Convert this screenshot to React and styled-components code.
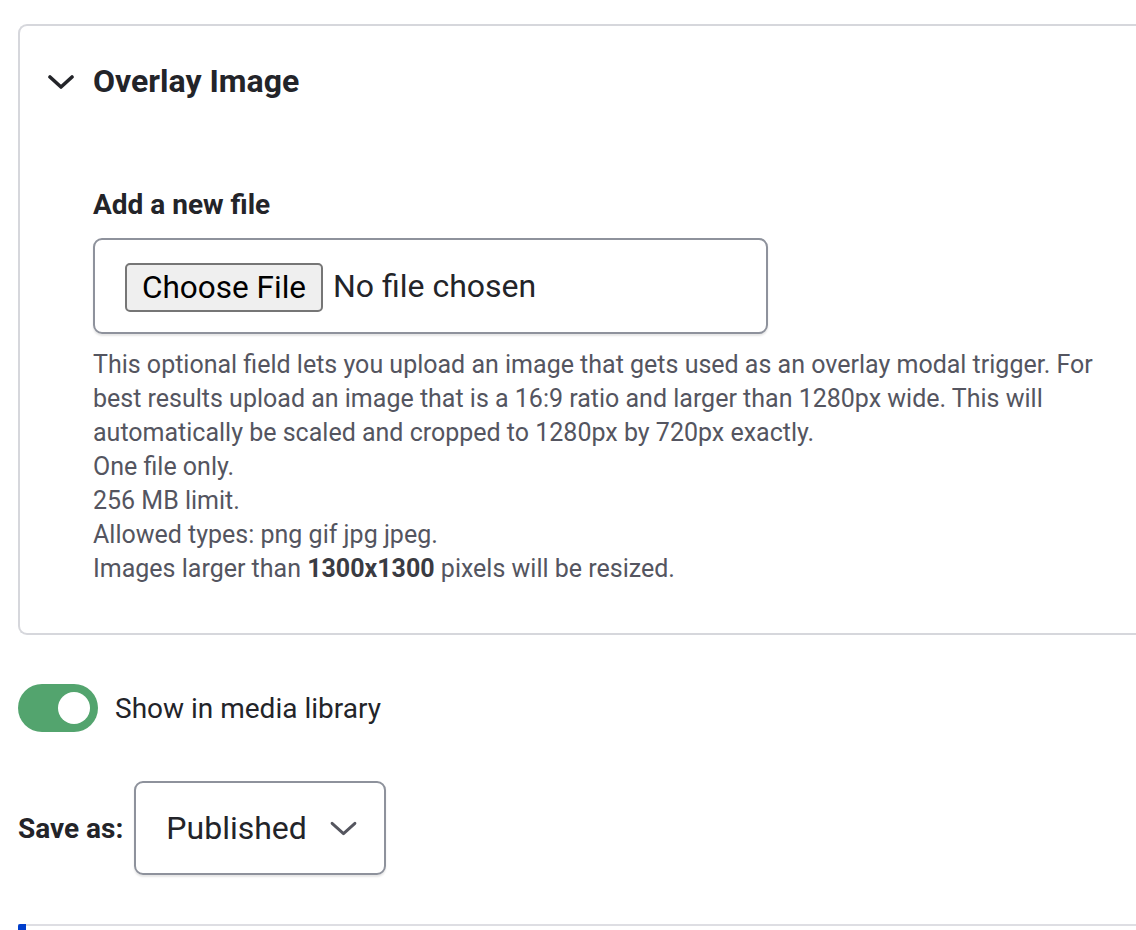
import React from 'react'
import styled, { createGlobalStyle } from 'styled-components'

const GlobalStyle = createGlobalStyle`
    html, body {
        margin: 0;
        padding: 0;
        background: #ffffff;
        overflow: hidden;
    }
    body {
        font-family: Roboto, "Liberation Sans", Arial, sans-serif;
        color: #232429;
    }
`;

const Chevron = ({ width, height, stroke, weight }) => (
    <svg width={width} height={height} viewBox="0 0 26 14" fill="none">
        <polyline
            points="2,2 13,12 24,2"
            stroke={stroke}
            strokeWidth={weight}
            strokeLinecap="round"
            strokeLinejoin="round"
        />
    </svg>
);

const App = () => {
    return (
        <Page>
            <GlobalStyle />
            <Card>
                <Summary>
                    <Chevron width={26} height={14} stroke="#232429" weight={3.6} />
                    <Title>Overlay Image</Title>
                </Summary>
                <Body>
                    <Label>Add a new file</Label>
                    <FileBox>
                        <ChooseButton type="button">Choose File</ChooseButton>
                        <FileName>No file chosen</FileName>
                    </FileBox>
                    <Description>
                        This optional field lets you upload an image that gets used as an overlay modal trigger. For
                        best results upload an image that is a 16:9 ratio and larger than 1280px wide. This will
                        automatically be scaled and cropped to 1280px by 720px exactly.
                        <br />
                        One file only.
                        <br />
                        256 MB limit.
                        <br />
                        Allowed types: png gif jpg jpeg.
                        <br />
                        Images larger than <strong>1300x1300</strong> pixels will be resized.
                    </Description>
                </Body>
            </Card>

            <ToggleRow>
                <Toggle $on>
                    <Knob $on />
                </Toggle>
                <ToggleLabel>Show in media library</ToggleLabel>
            </ToggleRow>

            <SaveRow>
                <SaveLabel>Save as:</SaveLabel>
                <Select>
                    <SelectValue>Published</SelectValue>
                    <Chevron width={27} height={15} stroke="#55565f" weight={2.8} />
                </Select>
            </SaveRow>

            <Footer>
                <FooterMark />
            </Footer>
        </Page>
    )
}

export default App;

const Page = styled.div`
    padding: 24px 0 0 18px;
    width: 1136px;
    box-sizing: border-box;
`;

const Card = styled.div`
    border: 2px solid #d6d7dc;
    border-right: none;
    border-radius: 9px 0 0 9px;
    margin-right: -2px;
    padding-bottom: 47px;
`;

const Summary = styled.div`
    display: flex;
    align-items: center;
    gap: 19px;
    height: 110px;
    padding-left: 28px;
    svg {
        margin-top: 2px;
    }
`;

const Title = styled.h2`
    margin: 0;
    font-size: 32px;
    font-weight: 700;
    line-height: 40px;
    color: #232429;
`;

const Body = styled.div`
    padding: 51px 0 0 73px;
`;

const Label = styled.div`
    font-size: 28px;
    font-weight: 700;
    line-height: 36px;
    color: #232429;
    margin-bottom: 15px;
`;

const FileBox = styled.div`
    display: flex;
    align-items: center;
    gap: 10px;
    width: 675px;
    height: 96px;
    box-sizing: border-box;
    border: 2px solid #8e929c;
    border-radius: 9px;
    padding: 0 0 0 30px;
    box-shadow: 0 2px 2px rgba(0, 0, 0, 0.1);
`;

const ChooseButton = styled.button`
    height: 49px;
    padding: 0 15px;
    font-family: Roboto, "Liberation Sans", Arial, sans-serif;
    font-size: 31.5px;
    color: #000000;
    background: #efefef;
    border: 2px solid #767676;
    border-radius: 5px;
    margin-top: 2px;
`;

const FileName = styled.span`
    font-size: 32px;
    color: #232429;
`;

const Description = styled.p`
    margin: 14px 0 0 0;
    max-width: 1035px;
    font-size: 25px;
    line-height: 34px;
    color: #545560;
    strong {
        font-weight: 700;
        color: #3a3b42;
    }
`;

const ToggleRow = styled.div`
    display: flex;
    align-items: center;
    gap: 17px;
    margin-top: 49px;
`;

const Toggle = styled.div`
    position: relative;
    width: 80px;
    height: 48px;
    border-radius: 24px;
    background: ${p => (p.$on ? '#53a46e' : '#8e929c')};
`;

const Knob = styled.div`
    position: absolute;
    top: 8px;
    left: ${p => (p.$on ? '40px' : '8px')};
    width: 32px;
    height: 32px;
    border-radius: 50%;
    background: #ffffff;
`;

const ToggleLabel = styled.span`
    font-size: 28px;
    color: #232429;
`;

const SaveRow = styled.div`
    display: flex;
    align-items: center;
    gap: 11px;
    margin-top: 49px;
`;

const SaveLabel = styled.span`
    font-size: 28px;
    font-weight: 700;
    color: #232429;
`;

const Select = styled.div`
    display: flex;
    align-items: center;
    gap: 23px;
    width: 252px;
    height: 94px;
    box-sizing: border-box;
    padding-left: 30px;
    border: 2px solid #8e929c;
    border-radius: 9px;
    box-shadow: 0 2px 2px rgba(0, 0, 0, 0.1);
`;

const SelectValue = styled.span`
    font-size: 32px;
    color: #232429;
`;

const Footer = styled.div`
    margin-top: 49px;
    border-top: 2px solid #dedee3;
    height: 4px;
`;

const FooterMark = styled.div`
    width: 8px;
    height: 6px;
    margin-top: -2px;
    background: #003ecc;
    border-radius: 2px 0 0 0;
`;
